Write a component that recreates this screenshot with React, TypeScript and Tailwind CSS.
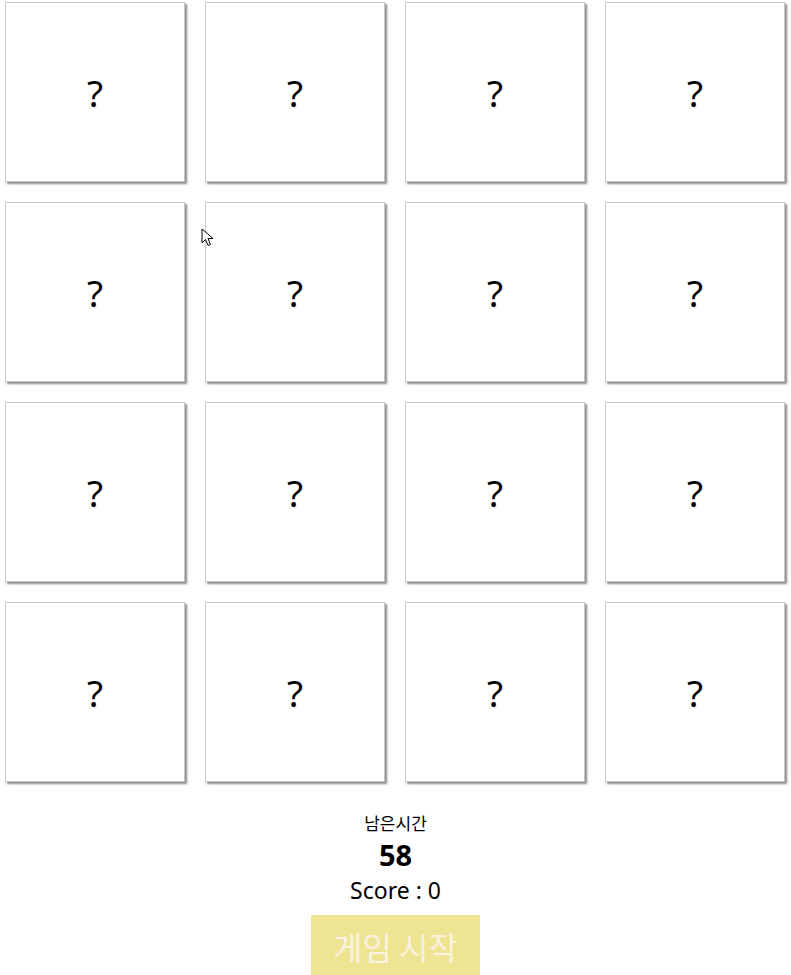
const cards = Array.from({ length: 16 }, (_, i) => i);

function Cursor() {
  return (
    <svg
      className="pointer-events-none absolute left-[201px] top-[228px]"
      width="14"
      height="20"
      viewBox="0 0 14 20"
    >
      <path
        d="M1 1 L1 15 L4.5 11.5 L7 17.5 L9.5 16.5 L7 10.5 L12 10.5 Z"
        fill="#fff"
        stroke="#000"
        strokeWidth="1"
        strokeLinejoin="miter"
      />
    </svg>
  );
}

export default function App() {
  return (
    <div className="relative min-h-[975px] overflow-hidden bg-white font-['Noto_Sans','Noto_Sans_CJK_KR',sans-serif] text-black">
      <div className="flex pt-[2px]">
        <div className="-ml-[5px] grid w-[800px] shrink-0 grid-cols-4 gap-y-[20px]">
          {cards.map((c) => (
            <div key={c} className="flex justify-center">
              <div className="flex h-[180px] w-[180px] items-center justify-center border border-[#c8c8c8] bg-white text-[37px] leading-none shadow-[2px_2px_2px_#8a8a8a]">
                ?
              </div>
            </div>
          ))}
        </div>
      </div>

      <div className="mt-[30px] flex flex-col items-center">
        <div className="text-[17px] leading-[22px] font-['Noto_Sans_CJK_KR',sans-serif]">남은시간</div>
        <div className="mt-[4px] text-[29px] font-bold leading-[34px]">58</div>
        <div className="mt-[3px] text-[23px] leading-[30px]">Score : 0</div>
        <button
          type="button"
          className="mt-[10px] flex h-[62px] w-[169px] items-center justify-center bg-[#ede592] text-[32px] text-[#faf1df] font-['Noto_Sans_CJK_KR',sans-serif]"
        >
          게임 시작
        </button>
      </div>

      <Cursor />
    </div>
  );
}
